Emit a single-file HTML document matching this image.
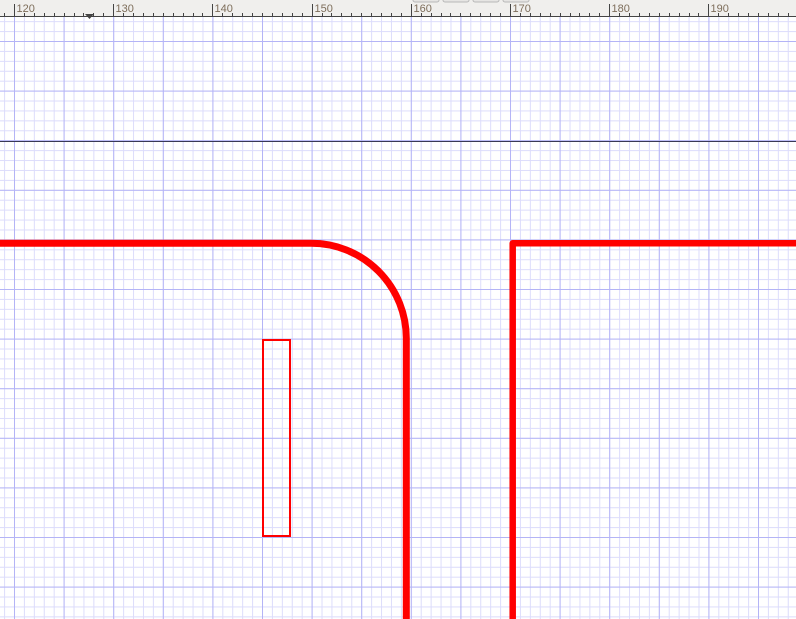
<!DOCTYPE html>
<html><head><style>
html,body{margin:0;padding:0;width:796px;height:619px;overflow:hidden;background:#fff}
svg{display:block}
</style></head><body>
<svg width="796" height="619" xmlns="http://www.w3.org/2000/svg">
<defs>
<pattern id="minor" x="4.08" y="1.32" width="9.92" height="9.92" patternUnits="userSpaceOnUse">
<path d="M0.5 0V9.92M0 0.5H9.92" stroke="#dcdcfb" stroke-width="1" fill="none"/>
</pattern>
<pattern id="major" x="14" y="41" width="49.6" height="49.6" patternUnits="userSpaceOnUse">
<path d="M0.5 0V49.6M0 0.5H49.6" stroke="#b4b4f6" stroke-width="1" fill="none"/>
</pattern>
</defs>
<rect x="0" y="17" width="796" height="602" fill="url(#minor)"/>
<rect x="0" y="17" width="796" height="602" fill="url(#major)"/>
<line x1="0" y1="141.5" x2="796" y2="141.5" stroke="#3a3a55" stroke-width="1"/>
<rect x="0" y="0" width="796" height="16" fill="#f0efed"/>
<rect x="413" y="-4" width="26" height="6" rx="2" fill="#e6e5e3" stroke="#b8b8b8"/>
<rect x="443" y="-4" width="26" height="6" rx="2" fill="#e6e5e3" stroke="#b8b8b8"/>
<rect x="473" y="-4" width="26" height="6" rx="2" fill="#e6e5e3" stroke="#b8b8b8"/>
<rect x="503" y="-4" width="26" height="6" rx="2" fill="#e6e5e3" stroke="#b8b8b8"/>
<line x1="0" y1="16.5" x2="796" y2="16.5" stroke="#444" stroke-width="1"/>
<g stroke="#444" stroke-width="1" id="ticks"></g>
<g font-family="Liberation Sans, sans-serif" font-size="11" fill="#7d6d5a" id="labels"></g>
<path d="M85 14H94L89.5 19Z" fill="#444"/>
<path d="M0 243.3H311A95 95 0 0 1 406.3 338.3V619" stroke="#ff0000" stroke-width="7" fill="none"/>
<path d="M512.7 619V243.3H796" stroke="#ff0000" stroke-width="6.5" fill="none" stroke-linejoin="round"/>
<rect x="263" y="340" width="27" height="196" stroke="#ff0000" stroke-width="2" fill="none"/>
</svg>
<script>
var t=document.getElementById('ticks'),l=document.getElementById('labels'),ns='http://www.w3.org/2000/svg';
for(var i=-2;i<80;i++){var x=Math.round(14+i*9.92)+0.5;if(x<0||x>796)continue;
var ln=document.createElementNS(ns,'line');ln.setAttribute('x1',x);ln.setAttribute('x2',x);
var maj=((i%10)+10)%10==0;ln.setAttribute('y1',maj?4:13);ln.setAttribute('y2',16);t.appendChild(ln);
if(maj){var tx=document.createElementNS(ns,'text');tx.setAttribute('x',x+2);tx.setAttribute('y',12);tx.textContent=120+i;l.appendChild(tx);}}
</script>
</body></html>
